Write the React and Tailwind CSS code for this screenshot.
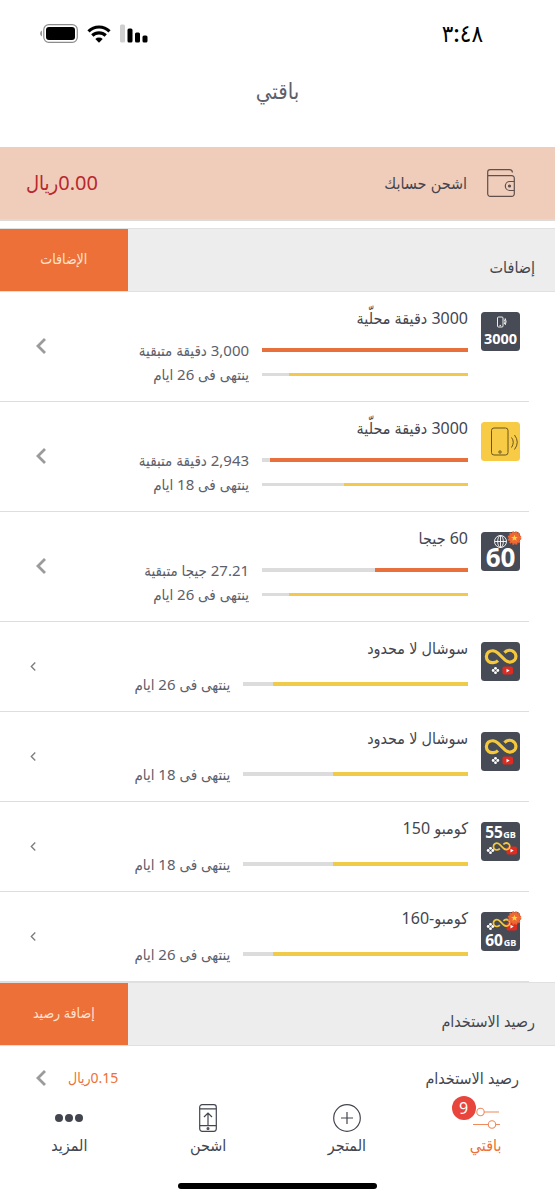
import React from 'react';

const addons = [
  { id: 1, icon: 'local3000', name: '3000 دقيقة محلّية', remaining: '3,000 دقيقة متبقية', used: 100, expires: 'ينتهى فى 26 ايام', days: 87 },
  { id: 2, icon: 'phone', name: '3000 دقيقة محلّية', remaining: '2,943 دقيقة متبقية', used: 96, expires: 'ينتهى فى 18 ايام', days: 60 },
  { id: 3, icon: 'data60', name: '60 جيجا', remaining: '27.21 جيجا متبقية', used: 45, expires: 'ينتهى فى 26 ايام', days: 87 },
  { id: 4, icon: 'social', name: 'سوشال لا محدود', expires: 'ينتهى فى 26 ايام', days: 87 },
  { id: 5, icon: 'social', name: 'سوشال لا محدود', expires: 'ينتهى فى 18 ايام', days: 60 },
  { id: 6, icon: 'combo55', name: 'كومبو 150', expires: 'ينتهى فى 18 ايام', days: 60 },
  { id: 7, icon: 'combo60', name: 'كومبو-160', expires: 'ينتهى فى 26 ايام', days: 87 },
];

function InfinityMark({ transform }) {
  return (
    <g transform={transform} fill="none" stroke="#f5c83c" strokeWidth="3.2">
      <path d="M17 18.6C14.5 21 10 21.5 7.300 19.2C4.6 16.9 4.8 12.3 7.5 10.1C10.5 7.8 14.3 8.6 17 11.2L24.2 18.2C27 20.8 31.2 20.7 33.5 18.2C35.6 15.8 35.3 12 32.9 9.9C30 7.5 26 8.2 23.4 10.6" />
    </g>
  );
}

function Youtube({ x, y }) {
  return (
    <g transform={`translate(${x} ${y})`}>
      <rect width="10.5" height="8" rx="1.8" fill="#e02b20" />
      <path d="M4 2.3v3.6l3.2-1.8z" fill="#fff" />
    </g>
  );
}

function Dots({ x, y }) {
  return (
    <g transform={`translate(${x} ${y})`} fill="#fff">
      <circle cx="0" cy="-2.2" r="1.4" />
      <circle cx="0" cy="2.2" r="1.4" />
      <circle cx="-2.3" cy="0" r="1.4" />
      <circle cx="2.3" cy="0" r="1.4" />
    </g>
  );
}

function Burst() {
  return (
    <g>
      <circle cx="33.5" cy="6" r="5.8" fill="#ee6836" />
      <circle cx="33.5" cy="6" r="6" fill="none" stroke="#ee6836" strokeWidth="1.6" strokeDasharray="1.9 1.24" />
      <path d="M33.5 2.8l.9 2.1 2.3.2-1.700 1.5.5 2.2-2-1.2-2 1.200.5-2.200-1.700-1.500 2.300-.2z" fill="#ffd23e" />
    </g>
  );
}

function AddonIcon({ type }) {
  const text = {
    fill: '#fff',
    fontWeight: 700,
    textAnchor: 'middle',
    direction: 'ltr',
    fontFamily: '"Open Sans", sans-serif',
  };

  return (
    <svg viewBox="0 0 39 39" className="size-[39px] mt-0.5 shrink-0 overflow-visible" aria-hidden="true">
      <rect width="39" height="39" rx="3.5" fill={type === 'phone' ? '#f7cb45' : '#474b55'} />

      {type === 'local3000' && (
        <>
          <g fill="none" stroke="#fff" strokeWidth="0.9">
            <rect x="16.5" y="5" width="5.5" height="10" rx="1" />
            <path d="M23.3 7.5a4 4 0 0 1 0 4.5M24.2 6.3q1.8 3.2 0 6.7" />
          </g>
          <circle cx="19.2" cy="13.5" r="0.7" fill="#fff" />
          <text x="19.5" y="31.5" fontSize="14.5" {...text}>3000</text>
        </>
      )}

      {type === 'phone' && (
        <g fill="none" stroke="#6b551e" strokeWidth="1">
          <rect x="10.5" y="6" width="16.5" height="27" rx="2.5" />
          <circle cx="19" cy="30" r="1.2" />
          <path d="M30.5 15.5q3.5 4.5 0 10M33.5 13q5.500 7.200 0 14.500" />
        </g>
      )}

      {type === 'data60' && (
        <>
          <g fill="none" stroke="#fff" strokeWidth="0.9">
            <circle cx="19.5" cy="9.5" r="6" />
            <ellipse cx="19.5" cy="9.5" rx="2.8" ry="6" />
            <path d="M19.5 3.5v12M13.5 9.5h12" />
          </g>
          <Burst />
          <text x="19.5" y="35" fontSize="26" {...text}>60</text>
        </>
      )}

      {type === 'social' && (
        <>
          <InfinityMark />
          <Youtube x="21.5" y="24.5" />
          <Dots x="14.5" y="28.5" />
        </>
      )}

      {type === 'combo55' && (
        <>
          <text x="13" y="16" fontSize="15.5" {...text}>55</text>
          <text x="28.5" y="16" fontSize="9" {...text}>GB</text>
          <Dots x="9.5" y="28.5" />
          <Youtube x="25.5" y="24.5" />
          <InfinityMark transform="translate(9.5 16.5) scale(0.55)" />
        </>
      )}

      {type === 'combo60' && (
        <>
          <Dots x="9.5" y="14.5" />
          <Youtube x="25.5" y="10.5" />
          <InfinityMark transform="translate(9.5 3) scale(0.55)" />
          <Burst />
          <text x="13" y="33.5" fontSize="15.5" {...text}>60</text>
          <text x="29" y="33.5" fontSize="9" {...text}>GB</text>
        </>
      )}
    </svg>
  );
}

function Chevron({ small }) {
  return (
    <svg
      viewBox="0 0 10 16"
      className={small ? 'w-[6px] h-[9px] text-[#7d7d7d]' : 'w-[10px] h-4 text-[#9b9b9b]'}
      fill="none"
      stroke="currentColor"
      strokeWidth={small ? 2.4 : 2.8}
      aria-hidden="true"
    >
      <path d="M9 1L2 8l7 7" />
    </svg>
  );
}

function Bar({ value, thin, color }) {
  return (
    <div className={`bg-[#dcdcdc] ${thin ? 'h-[3px]' : 'h-1'}`}>
      <div className={`h-full ${color}`} style={{ width: `${value}%` }} />
    </div>
  );
}

function AddonRow({ addon }) {
  const full = Boolean(addon.remaining);

  return (
    <li className="relative">
      <a href="#" className={`flex items-start pt-[18px] pr-[35px] gap-[13px] ${full ? 'h-[110px]' : 'h-[90px]'}`}>
        <AddonIcon type={addon.icon} />
        <div className="grow">
          <h3 className="text-base leading-4 text-[#43464f]">{addon.name}</h3>
          {full ? (
            <>
              <div className="flex items-center gap-[13px] h-6 mt-3">
                <div className="w-[44%]"><Bar value={addon.used} color="bg-[#e8703c]" /></div>
                <p className="text-[15px] leading-5 text-[#5d606a] whitespace-nowrap">{addon.remaining}</p>
              </div>
              <div className="flex items-center gap-[13px] h-6">
                <div className="w-[44%]"><Bar value={addon.days} thin color="bg-[#f2c94c]" /></div>
                <p className="text-[15px] leading-5 text-[#5d606a] whitespace-nowrap">{addon.expires}</p>
              </div>
            </>
          ) : (
            <div className="flex items-center gap-[13px] h-6 mt-4">
              <div className="w-[48%]"><Bar value={addon.days} color="bg-[#f0cb4a]" /></div>
              <p className="text-[15px] leading-5 text-[#5d606a] whitespace-nowrap">{addon.expires}</p>
            </div>
          )}
        </div>
        <span className={`absolute ${full ? 'left-9 top-[46px]' : 'left-[30px] top-10'}`}>
          <Chevron small={!full} />
        </span>
      </a>
      <div className="absolute bottom-0 left-0 right-[26px] h-px bg-[#dedede]" />
    </li>
  );
}

function SectionHeader({ title, action }) {
  return (
    <div className="flex h-16 bg-[#ededed] border-y border-[#e0e0e0]">
      <h2 className="grow pr-5 pt-[26px] text-base leading-6 text-[#43464f]">{title}</h2>
      <button className="w-[23%] pb-0.5 bg-[#ed7038] text-sm text-[#ffe3d3]">{action}</button>
    </div>
  );
}

function StatusBar() {
  return (
    <div className="flex items-center justify-between h-[66px] pr-[72px] pl-10">
      <span className="text-2xl leading-6 font-medium text-black">٣:٤٨</span>
      <div dir="ltr" className="flex items-center gap-[9px]">
        <svg viewBox="0 0 38 19" className="w-[38px] h-[19px]" aria-hidden="true">
          <path d="M2 6.5v6q-2-1-2-3t2-3z" fill="#9a9a9a" />
          <rect x="3.8" y="0.7" width="33.5" height="17.6" rx="5" fill="#fff" stroke="#8c8c8c" strokeWidth="1.2" />
          <rect x="6" y="3" width="29" height="13" rx="3" />
        </svg>
        <svg viewBox="0 0 24 19" className="w-6 h-[19px]" aria-hidden="true">
          <g fill="none" stroke="#000" strokeWidth="3.2">
            <path d="M1.5 7.3a15 15 0 0 1 21 0M5.3 11.5a9.6 9.6 0 0 1 13.4 0" />
          </g>
          <path d="M12 18.8l-3.7-3.9a5.4 5.4 0 0 1 7.4 0z" />
        </svg>
        <svg viewBox="0 0 28 19" className="w-7 h-[19px]" aria-hidden="true">
          <rect x="0" y="0.5" width="5" height="18" rx="1.5" fill="#cfcfcf" />
          <rect x="7.5" y="4.5" width="5" height="14" rx="1.5" />
          <rect x="15" y="8.5" width="5" height="10" rx="1.5" />
          <rect x="22.5" y="11.5" width="5" height="7" rx="1.5" />
        </svg>
      </div>
    </div>
  );
}

const tabs = [
  {
    label: 'باقتي',
    active: true,
    icon: (
      <svg viewBox="0 0 28 28" className="size-7" fill="#fff" stroke="#ee8a5c" strokeWidth="1.1">
        <path d="M8 8h19M1 20.5h27" />
        <circle cx="8.5" cy="8" r="3.7" />
        <circle cx="20" cy="20.5" r="3.7" />
      </svg>
    ),
  },
  {
    label: 'المتجر',
    icon: (
      <svg viewBox="0 0 28 28" className="size-7" fill="none" stroke="currentColor" strokeWidth="1.2">
        <circle cx="14" cy="14" r="13.3" />
        <path d="M14 8v12M8 14h12" />
      </svg>
    ),
  },
  {
    label: 'اشحن',
    icon: (
      <svg viewBox="0 0 28 28" className="size-7" fill="none" stroke="currentColor" strokeWidth="1.2">
        <rect x="5.7" y="0.7" width="16.6" height="26.6" rx="2.5" />
        <path d="M5.7 4.8h16.6M5.7 21.7h16.6M14 21V9M10 13l4-4 4 4" />
        <circle cx="14" cy="24.5" r="0.9" />
      </svg>
    ),
  },
  {
    label: 'المزيد',
    icon: (
      <svg viewBox="0 0 28 28" className="size-7" fill="currentColor">
        <circle cx="4" cy="14" r="4" />
        <circle cx="14" cy="14" r="4" />
        <circle cx="24" cy="14" r="4" />
      </svg>
    ),
  },
];

function App() {
  return (
    <div
      dir="rtl"
      className="min-h-screen flex flex-col bg-white font-['Noto_Sans','DejaVu_Sans_Condensed','DejaVu_Sans',sans-serif]"
    >
      <StatusBar />

      {/* Page title */}
      <header className="h-[81px] pt-2 text-center">
        <h1 className="text-[22px] leading-8 font-light text-[#5d606a]">باقتي</h1>
      </header>

      {/* Account balance */}
      <a href="#" className="flex items-center h-[74px] pr-10 pl-[26px] mb-[7px] bg-[#f0ccba] border-b-2 border-[#dedad7]">
        <svg viewBox="0 0 28 28" className="size-7 text-[#5f4f4d]" fill="none" stroke="currentColor" strokeWidth="1.2" aria-hidden="true">
          <path d="M25.5 3.5q-.5-2.800-3-2.800H3.200a2.500 2.500 0 0 0-2.500 2.500v21.600a2.500 2.500 0 0 0 2.500 2.500h21.600a2.500 2.500 0 0 0 2.500-2.500V9.200a2.500 2.500 0 0 0-2.500-2.500H.7" />
          <path d="M27.3 12.500h-4.500a4.500 4.500 0 0 0 0 9h4.500" />
          <circle cx="22.5" cy="17" r="1" fill="currentColor" />
        </svg>
        <span className="mr-5 text-base text-[#43464f]">اشحن حسابك</span>
        <span className="mr-auto text-xl text-[#b8282e]">0.00ريال</span>
      </a>

      <SectionHeader title="إضافات" action="الإضافات" />
      <ul>
        {addons.map((addon) => (
          <AddonRow key={addon.id} addon={addon} />
        ))}
      </ul>

      <SectionHeader title="رصيد الاستخدام" action="إضافة رصيد" />
      <a href="#" className="flex items-center h-14 pt-2 pr-9 pl-9">
        <span className="text-base text-[#43464f]">رصيد الاستخدام</span>
        <span className="mr-auto ml-[22px] text-sm text-[#ed7038]">0.15ريال</span>
        <Chevron />
      </a>

      {/* Bottom tabs */}
      <nav className="grid grid-cols-4 mt-auto">
        {tabs.map((tab) => (
          <a
            key={tab.label}
            href="#"
            className={`relative flex flex-col items-center gap-px text-base leading-6 ${tab.active ? 'text-[#ed7038]' : 'text-[#43464f]'}`}
          >
            {tab.icon}
            {tab.label}
            {tab.active && (
              <span className="absolute -top-2 right-1/2 mr-[10px] size-6 rounded-full bg-[#e8453c] text-center text-white">
                9
              </span>
            )}
          </a>
        ))}
      </nav>
      <div className="w-[36%] h-[6px] mx-auto mt-[26px] mb-[11px] rounded-full bg-black" />
    </div>
  );
}

export default App;
